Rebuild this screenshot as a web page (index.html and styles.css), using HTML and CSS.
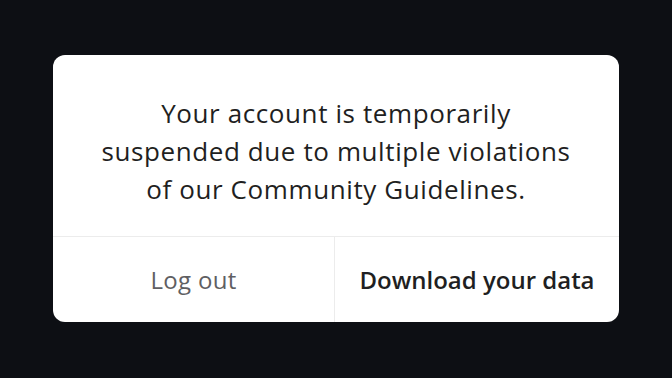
FILE: index.html
```html
<!DOCTYPE html>
<html>
<head>
<meta charset="utf-8">
<link rel="stylesheet" href="styles.css">
</head>
<body>
<div class="dialog">
  <div class="message">Your account is temporarily<br>suspended due to multiple violations<br>of our Community Guidelines.</div>
  <div class="actions">
    <div class="btn btn-secondary">Log out</div>
    <div class="btn btn-primary">Download your data</div>
  </div>
</div>
</body>
</html>
```

FILE: styles.css
```css
html, body {
  margin: 0;
  padding: 0;
  background: #0d0f14;
  width: 672px;
  height: 378px;
  overflow: hidden;
}
body {
  padding-top: 55px;
  box-sizing: border-box;
}
.dialog {
  margin-left: 53px;
  width: 566px;
  height: 267px;
  background: #ffffff;
  border-radius: 12px;
  display: flex;
  flex-direction: column;
  font-family: "Open Sans", "Liberation Sans", sans-serif;
  overflow: hidden;
}
.message {
  height: 182px;
  box-sizing: border-box;
  padding-top: 39px;
  text-align: center;
  font-size: 26px;
  letter-spacing: 0.6px;
  line-height: 38px;
  color: #1f1f22;
  border-bottom: 1px solid #ececec;
}
.actions {
  flex: 1;
  display: grid;
  grid-template-columns: 282px 1fr;
}
.btn {
  display: flex;
  align-items: center;
  justify-content: center;
  font-size: 24px;
}
.btn-secondary {
  color: #5f5f63;
  letter-spacing: 0.3px;
  border-right: 1px solid #ececec;
}
.btn-primary {
  color: #1f1f22;
  font-weight: 600;
}
```
